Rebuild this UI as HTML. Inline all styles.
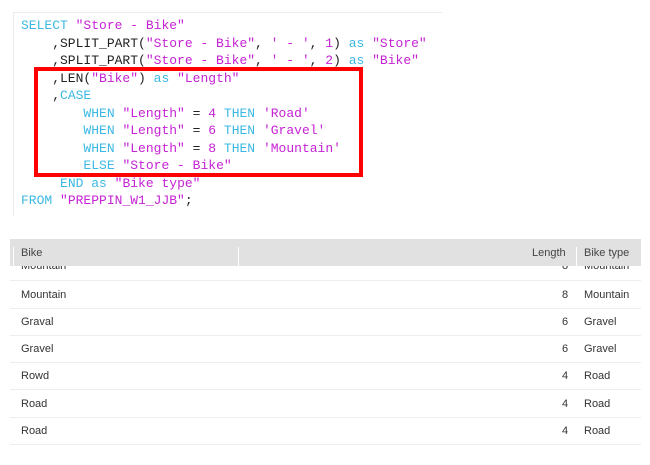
<!DOCTYPE html>
<html><head><meta charset="utf-8"><style>
body{margin:0;width:650px;height:465px;background:#fff;position:relative;overflow:hidden;font-family:"Liberation Sans",sans-serif}
.ed{position:absolute;left:13px;top:12px;width:428px;height:203px;border-top:1px solid #ececec;border-left:1px solid #ececec}
pre{position:absolute;left:21px;top:17px;margin:0;font-family:"Liberation Mono",monospace;font-size:13px;line-height:17.5px;color:#222}
.k{color:#3bb8e3}.s{color:#c522d4}
.box{position:absolute;left:34px;top:67px;width:321px;height:102px;border:4px solid #f00}
.hd{position:absolute;left:10px;top:239px;width:631px;height:27px;background:#e1e1e1;font-size:11px;color:#444}
.hd div{position:absolute;top:8px}
.sep{position:absolute;top:0;width:1px;height:27px;background:#fff}
.row{position:absolute;left:10px;width:631px;height:27px;border-bottom:1px solid #eee;font-size:11px;color:#333}
.row div{position:absolute;top:8px}
</style></head><body>
<div class="ed"></div>
<pre><span class="k">SELECT</span> <span class="s">"Store - Bike"</span>
    ,SPLIT_PART(<span class="s">"Store - Bike"</span>, <span class="s">' - '</span>, <span class="s">1</span>) <span class="k">as</span> <span class="s">"Store"</span>
    ,SPLIT_PART(<span class="s">"Store - Bike"</span>, <span class="s">' - '</span>, <span class="s">2</span>) <span class="k">as</span> <span class="s">"Bike"</span>
    ,LEN(<span class="s">"Bike"</span>) <span class="k">as</span> <span class="s">"Length"</span>
    ,<span class="k">CASE</span>
        <span class="k">WHEN</span> <span class="s">"Length"</span> = <span class="s">4</span> <span class="k">THEN</span> <span class="s">'Road'</span>
        <span class="k">WHEN</span> <span class="s">"Length"</span> = <span class="s">6</span> <span class="k">THEN</span> <span class="s">'Gravel'</span>
        <span class="k">WHEN</span> <span class="s">"Length"</span> = <span class="s">8</span> <span class="k">THEN</span> <span class="s">'Mountain'</span>
        <span class="k">ELSE</span> <span class="s">"Store - Bike"</span>
     <span class="k">END</span> <span class="k">as</span> <span class="s">"Bike type"</span>
<span class="k">FROM</span> <span class="s">"PREPPIN_W1_JJB"</span>;</pre>
<div class="box"></div>
<div class="row" style="top:253px"><div style="left:11px;top:7px">Mountain</div><div style="left:552px;top:7px">8</div><div style="left:574px;top:7px">Mountain</div></div>
<div class="hd"><div class="sep" style="left:3px"></div><div style="left:11px">Bike</div><div class="sep" style="left:228px"></div><div style="left:522px">Length</div><div class="sep" style="left:566px"></div><div style="left:574px">Bike type</div></div>
<div class="row" style="top:281px"><div style="left:11px">Mountain</div><div style="left:552px">8</div><div style="left:574px">Mountain</div></div>
<div class="row" style="top:308px"><div style="left:11px">Graval</div><div style="left:552px">6</div><div style="left:574px">Gravel</div></div>
<div class="row" style="top:335px"><div style="left:11px">Gravel</div><div style="left:552px">6</div><div style="left:574px">Gravel</div></div>
<div class="row" style="top:362px"><div style="left:11px">Rowd</div><div style="left:552px">4</div><div style="left:574px">Road</div></div>
<div class="row" style="top:390px"><div style="left:11px">Road</div><div style="left:552px">4</div><div style="left:574px">Road</div></div>
<div class="row" style="top:417px"><div style="left:11px">Road</div><div style="left:552px">4</div><div style="left:574px">Road</div></div>
</body></html>
